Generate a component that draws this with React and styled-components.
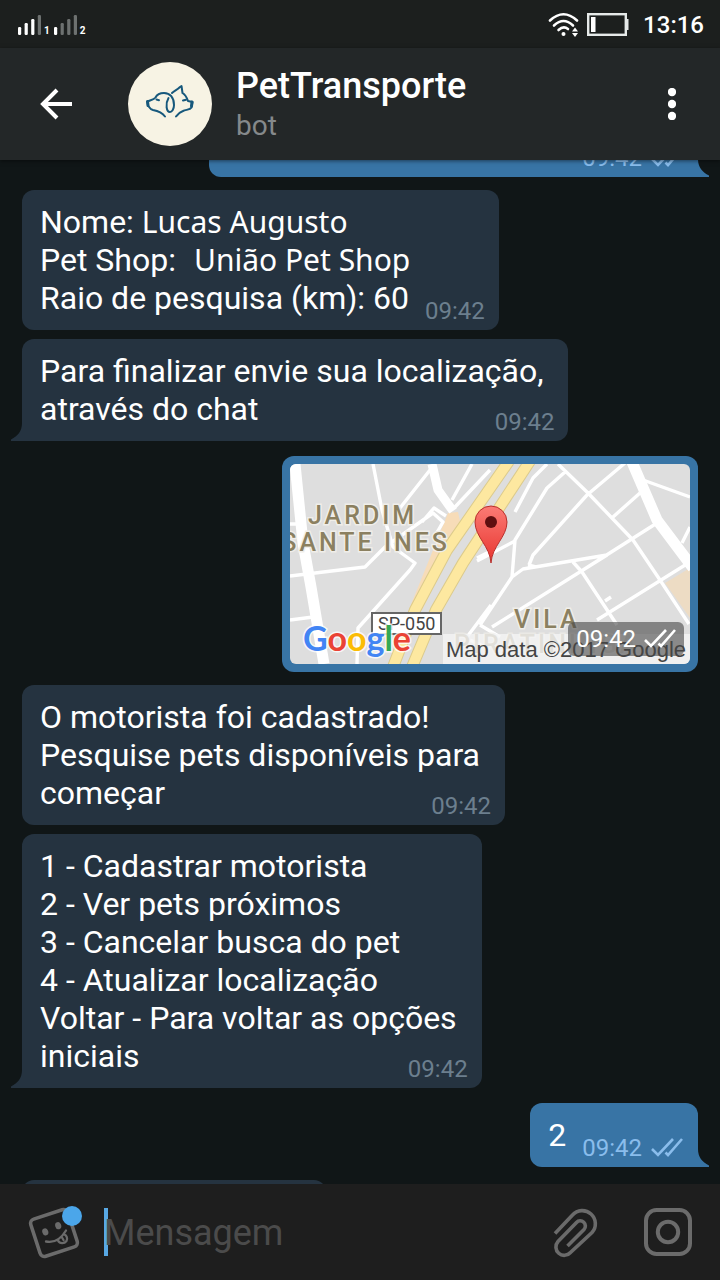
import React from "react";
import styled, { createGlobalStyle, css } from "styled-components";

const GlobalStyle = createGlobalStyle`
  *, *::before, *::after { box-sizing: border-box; }
  body { margin: 0; background: #101617; }
`;

const Screen = styled.div`
  display: flex;
  flex-direction: column;
  height: 100vh;
  overflow: hidden;
  background: #101617;
  color: #fff;
  font-family: Roboto, "Liberation Sans", sans-serif;
`;

/* ---------- status bar ---------- */

const StatusBar = styled.div`
  display: flex;
  flex: none;
  align-items: center;
  justify-content: space-between;
  height: 48px;
  padding: 2px 16px 0 18px;
  background: #1c1f1e;
`;

const StatusGroup = styled.div`
  display: flex;
  align-items: center;
  gap: ${(p) => p.$gap}px;
`;

const Signal = styled.span`
  display: flex;
  align-items: flex-end;
  gap: 3px;
  font-size: 10px;
  font-weight: 700;
  line-height: 9px;
`;

const Clock = styled.time`
  margin-left: 8px;
  font-size: 24px;
  font-weight: 500;
  line-height: 28px;
`;

/* ---------- header ---------- */

const Header = styled.header`
  position: relative;
  z-index: 1;
  display: flex;
  flex: none;
  align-items: center;
  height: 112px;
  padding: 0 24px 0 32px;
  background: #232728;
  box-shadow: 0 1px 4px rgba(0, 0, 0, 0.5);
`;

const IconButton = styled.button`
  display: flex;
  flex: none;
  align-items: center;
  justify-content: center;
  width: 48px;
  height: 56px;
  padding: 0;
  border: 0;
  background: none;
  color: ${(p) => p.$color || "#fff"};
  cursor: pointer;

  svg { flex: none; }
`;

const Avatar = styled.div`
  flex: none;
  width: 84px;
  height: 84px;
  margin: 0 24px 0 48px;
  border-radius: 50%;
  background: #f7f3e4;
`;

const Heading = styled.div`
  flex: 1;
  min-width: 0;
`;

const Title = styled.h1`
  margin: 0;
  font-size: 36px;
  font-weight: 500;
  line-height: 44px;
`;

const Subtitle = styled.p`
  margin: 0;
  color: #85898b;
  font-size: 28px;
  line-height: 36px;
`;

/* ---------- conversation ---------- */

const Conversation = styled.main`
  flex: 1;
  min-height: 0;
  overflow: hidden;
`;

const Messages = styled.ol`
  display: flex;
  flex-direction: column;
  align-items: flex-start;
  gap: 13px;
  margin: -49px 0 0;
  padding: 0 22px;
  list-style: none;
`;

const Group = styled.li`
  display: flex;
  flex-direction: column;
  align-self: ${(p) => (p.$out ? "flex-end" : "flex-start")};
  align-items: ${(p) => (p.$out ? "flex-end" : "flex-start")};
  gap: 9px;
  margin-top: ${(p) => (p.$out ? 2 : 0)}px;
`;

const bubbleFill = css`
  background: ${(p) => (p.$out ? "#3874a5" : "#253340")};
`;

const Bubble = styled.div`
  ${bubbleFill}
  position: relative;
  min-width: ${(p) => p.$minWidth || 0}px;
  min-height: 64px;
  padding: 13px 25px 13px 18px;
  border-radius: 12px;
  border-bottom-left-radius: ${(p) => (p.$tail && !p.$out ? 0 : 12)}px;
  border-bottom-right-radius: ${(p) => (p.$tail && p.$out ? 0 : 12)}px;
  font-size: 32px;
  line-height: 38px;
  white-space: pre-line;
`;

const TailShape = styled.svg`
  position: absolute;
  bottom: 0;
  ${(p) => (p.$out ? "left: 100%;" : "right: 100%;")}
`;

const Stamp = styled.span`
  display: flex;
  float: right;
  align-items: center;
  gap: 9px;
  margin: 18px ${(p) => (p.$out ? -10 : -11)}px -8px 16px;
  color: ${(p) => (p.$out ? "#8abdec" : "#6c7f8e")};
  font-size: 24px;
  line-height: 28px;
`;

const Answer = styled.span`
  margin-left: ${(p) => p.$gap}px;
  font-family: "Noto Sans", sans-serif;
  font-size: 30px;
  line-height: 32px;
`;

/* ---------- location message ---------- */

const LocationCard = styled.a`
  ${bubbleFill}
  position: relative;
  display: block;
  padding: 8px;
  border-radius: 12px;
  color: #fff;
  text-decoration: none;

  > svg { display: block; border-radius: 6px; }
`;

const MapStamp = styled.span`
  position: absolute;
  right: 14px;
  bottom: 16px;
  display: flex;
  align-items: center;
  gap: 8px;
  padding: 3px 8px;
  border-radius: 6px;
  background: rgba(70, 70, 70, 0.6);
  font-size: 24px;
  line-height: 28px;
`;

/* ---------- composer ---------- */

const Composer = styled.form`
  display: flex;
  flex: none;
  align-items: center;
  height: 96px;
  padding: 0 28px 0 32px;
  background: #1e1e1e;
`;

const Caret = styled.span`
  flex: none;
  width: 4px;
  height: 48px;
  margin: 0 -4px 0 24px;
  background: #58a8e4;
`;

const MessageInput = styled.input`
  flex: 1;
  min-width: 0;
  padding: 2px 0 0;
  border: 0;
  outline: 0;
  background: none;
  color: #fff;
  font: 36px/48px Roboto, "Liberation Sans", sans-serif;

  &::placeholder { color: #4b4b4b; opacity: 1; }
`;

const Actions = styled.div`
  display: flex;
  gap: 44px;
`;

/* ---------- drawings ---------- */

const SignalBars = ({ level }) => (
  <svg width="23" height="20" aria-hidden="true">
    {[8, 12, 16, 20].map((h, i) => (
      <rect key={h} x={i * 6.6} y={20 - h} width="3.2" height={h} rx="1.2" fill={i < level ? "#fff" : "#6d7170"} />
    ))}
  </svg>
);

const Wifi = () => (
  <svg width="32" height="26" viewBox="0 0 32 26" fill="none" stroke="#fff" strokeWidth="2.6" strokeLinecap="round" aria-hidden="true">
    <path d="M2 8.5Q15.500-4 29 8.500" />
    <path d="M6 13.500Q15.500 4.500 25 13.500" />
    <path d="M10.500 18Q15.500 13.500 20 17" />
    <circle cx="15.500" cy="22" r="2" fill="#fff" stroke="none" />
    <path d="M24 19.500l3-4 3 4zM24 21l3 4 3-4z" fill="#fff" stroke="none" />
  </svg>
);

const Battery = () => (
  <svg width="43" height="24" viewBox="0 0 43 24" aria-hidden="true">
    <rect x="2.200" y="1.200" width="37.600" height="20.600" fill="none" stroke="#e6eae9" strokeWidth="2.400" />
    <rect x="5" y="4" width="4.500" height="15" fill="#fff" />
    <rect x="39" y="6" width="3.500" height="11" fill="#e6eae9" />
  </svg>
);

const BackArrow = () => (
  <svg width="32" height="32" viewBox="0 0 32 32" fill="none" stroke="currentColor" strokeWidth="4" aria-hidden="true">
    <path d="M32 16H3M17 2L3 16l14 14" />
  </svg>
);

const Dots = () => (
  <svg width="8" height="32" viewBox="0 0 8 32" fill="currentColor" aria-hidden="true">
    <circle cx="4" cy="4" r="4.200" />
    <circle cx="4" cy="16" r="4.200" />
    <circle cx="4" cy="28" r="4.200" />
  </svg>
);

const PetLogo = () => (
  <svg width="84" height="84" viewBox="0 0 84 84" fill="none" stroke="#17587c" strokeWidth="2" strokeLinecap="round" strokeLinejoin="round" aria-hidden="true">
    <path d="M37 54.500C34 50.500 30 49 25 48C21.500 47 21.500 45 20 43.500L19.500 39.500C22 38 25.500 38 27.500 35.500C29.500 31.500 32 31 36 31C42 31 46 35.500 46 43C46 47 44 50 42 50C38.500 50 37 42 40.500 36" />
    <path d="M44 31C46 29 49 28 52 25L53.500 24L54.500 31C58 33 59 36 60 39L64.500 40L63.500 45.500C62 48 58 47.500 55 49C51 50.500 50 52 48 54.500" />
    <path d="M19.500 39.500L20 43.500M64 40L63.500 44" strokeWidth="3" />
    <path d="M28.500 37.500l2.500.8M55 38.500l3-.8" />
  </svg>
);

const Ticks = () => (
  <svg width="32" height="20" viewBox="0 0 32 20" fill="none" stroke="currentColor" strokeWidth="2.600" aria-hidden="true">
    <path d="M1 11l6 6L22 1M14.500 14.500l2.500 2.500L31 1" />
  </svg>
);

const Tail = ({ out }) => (
  <TailShape $out={out} width="12" height="18" viewBox="0 0 12 18" aria-hidden="true">
    {out ? (
      <path d="M0 0C0 8 4 13 11 16.500V18H0z" fill="#3874a5" />
    ) : (
      <path d="M12 0C12 8 8 13 1 16.500V18H12z" fill="#253340" />
    )}
  </TailShape>
);

const Sticker = () => (
  <svg width="56" height="56" viewBox="0 0 56 56" fill="none" stroke="currentColor" strokeWidth="3.600" strokeLinecap="round" aria-hidden="true">
    <rect x="6.500" y="9.500" width="39" height="39" rx="4.500" transform="rotate(-18 26 29)" />
    <g fill="currentColor" stroke="none">
      <ellipse cx="17.300" cy="28" rx="3" ry="3.600" transform="rotate(-18 17 28)" />
      <ellipse cx="30.300" cy="21.800" rx="3" ry="3.600" transform="rotate(-18 30 22)" />
    </g>
    <path d="M18 37.500Q30 40 38 26.500M30 36.500C32 40.500 36.500 39.500 38.500 37C40 34.500 38.500 31.500 36.500 30.500M34 33.500l1.500 2.500" strokeWidth="2.300" />
    <circle cx="44" cy="12" r="10" fill="#4ba6ea" stroke="none" />
  </svg>
);

const Paperclip = () => (
  <svg width="48" height="56" viewBox="1 0 48 56" fill="none" stroke="currentColor" strokeWidth="3.600" aria-hidden="true">
    <path d="M4 29.500L21.500 11A13 13 0 0 1 41 28.500L19.500 48.500A8 8 0 0 1 7 37.500L25.500 18.500A5 5 0 0 1 33 25.500L16.500 42" />
  </svg>
);

const CameraMark = () => (
  <svg width="48" height="48" viewBox="0 0 48 48" fill="none" stroke="currentColor" strokeWidth="4" aria-hidden="true">
    <rect x="2" y="2" width="44" height="44" rx="10.500" />
    <circle cx="24" cy="24" r="10.200" />
  </svg>
);

const HIGHWAYS = ["M219-3L157 86 125 146 103 203", "M240-3L173 99 146 146 122 203"];

const StreetMap = () => (
  <svg width="400" height="200" viewBox="0 0 400 200" role="img" aria-label="Mapa">
    <defs>
      <linearGradient id="pin" x1="0" y1="0" x2="0" y2="1">
        <stop offset="0" stopColor="#fb7b75" />
        <stop offset="1" stopColor="#e8352f" />
      </linearGradient>
    </defs>
    <rect width="400" height="200" fill="#dedede" />
    <path d="M158 49l10-1 4 18-40 80-14 2z" fill="#f7dcb8" />
    <path d="M375 119l25-15v50z" fill="#eddcc4" />
    <g fill="none" stroke="#fff" strokeWidth="3.400" strokeLinejoin="round">
      <path d="M83 0l9 46 11 37 22 16-5 7-52 58-1 36M0 112l75-9 20-20 48-34 10 9-8 14M132 58l12-14 12 8M140 6l-30 38M0 156l23-3M182 0l-20 36M165 43L200 6M187 94l14-7M177 173l24-32M180 176l20 9M0 60h8" />
      <path d="M268 0l30 29 45 47 27 40 29 44M335-1l-38 32-54 60-4 10M257 0l-14 14-18 34M275 8l-18 16-32 52-3 37M187 97l38-20M190 161l32-48 11-8 84-14-24 15M238 101l8 2M202 163l91-57 74-47M283 98l9 10 35 53M315 137l6-4M307 156l93-58M323 53l27-24M353 16l47 17M392 79l8-16M190 161l20 12" />
      <path d="M5 0l8 79 8 44 13 77" strokeWidth="11" />
      <path d="M142 0l6 26 15 21" strokeWidth="9" />
      <path d="M342-2l25 58 36 48" strokeWidth="11" />
    </g>
    {HIGHWAYS.map((d) => (
      <g key={d} fill="none">
        <path d={d} stroke="#dccb8c" strokeWidth="12" />
        <path d={d} stroke="#fde8a0" strokeWidth="10" />
      </g>
    ))}
    <g fill="#8b8060" stroke="#f0eee9" strokeWidth="3" paintOrder="stroke" fontFamily="Roboto, sans-serif" fontSize="25" fontWeight="500" letterSpacing="3">
      <text x="18" y="60">JARDIM</text>
      <text x="160" y="87" textAnchor="end">SANTE INES</text>
      <text x="224" y="164">VILA</text>
      <text x="164" y="189" opacity="0.700">PIRATININGA</text>
    </g>
    <rect x="82" y="149" width="69" height="21" fill="#fff" stroke="#666" strokeWidth="2" />
    <text x="88" y="166" fill="#444" fontFamily="Roboto, sans-serif" fontSize="18">SP-050</text>
    <rect x="153" y="170" width="247" height="30" fill="#f5f5f5" fillOpacity="0.750" />
    <text x="396" y="193" textAnchor="end" fill="#444" fontFamily="Liberation Sans, sans-serif" fontSize="22">Map data ©2017 Google</text>
    <text x="13" y="187" fontFamily="Lato, sans-serif" fontSize="34" fontWeight="700" stroke="#fff" strokeWidth="3" strokeOpacity="0.800" paintOrder="stroke">
      <tspan fill="#4285f4">G</tspan>
      <tspan fill="#ea4335">o</tspan>
      <tspan fill="#fbbc05">o</tspan>
      <tspan fill="#4285f4">g</tspan>
      <tspan fill="#34a853">l</tspan>
      <tspan fill="#ea4335">e</tspan>
    </text>
    <path d="M201 99C200 82 185 73 185 58A16 16 0 0 1 217 58C217 73 202 82 201 99z" fill="url(#pin)" stroke="#b8302c" strokeWidth="1" />
    <circle cx="201" cy="58" r="6" fill="#5f0f10" />
  </svg>
);

/* ---------- messages ---------- */

const Message = ({ out, tail, time = "09:42", minWidth, children }) => (
  <Bubble $out={out} $tail={tail} $minWidth={minWidth}>
    {children}
    {time && (
      <Stamp $out={out}>
        <time>{time}</time>
        {out && <Ticks />}
      </Stamp>
    )}
    {tail && <Tail out={out} />}
  </Bubble>
);

const MENU = [
  "1 - Cadastrar motorista",
  "2 - Ver pets próximos",
  "3 - Cancelar busca do pet",
  "4 - Atualizar localização",
  "Voltar - Para voltar as opções",
  "iniciais",
].join("\n");

export default function App() {
  return (
    <Screen>
      <GlobalStyle />
      <StatusBar>
        <StatusGroup $gap={4}>
          <Signal><SignalBars level={3} />1</Signal>
          <Signal><SignalBars level={1} />2</Signal>
        </StatusGroup>
        <StatusGroup $gap={6}>
          <Wifi />
          <Battery />
          <Clock>13:16</Clock>
        </StatusGroup>
      </StatusBar>

      <Header>
        <IconButton type="button" aria-label="Voltar"><BackArrow /></IconButton>
        <Avatar><PetLogo /></Avatar>
        <Heading>
          <Title>PetTransporte</Title>
          <Subtitle>bot</Subtitle>
        </Heading>
        <IconButton type="button" aria-label="Mais opções"><Dots /></IconButton>
      </Header>

      <Conversation>
        <Messages>
          <Group $out>
            <Message out tail minWidth={489} />
          </Group>
          <Group>
            <Message>
              Nome:<Answer $gap={8}>Lucas Augusto</Answer>{"\n"}
              Pet Shop:<Answer $gap={18}>União Pet Shop</Answer>{"\n"}
              Raio de pesquisa (km): 60
            </Message>
            <Message tail>{"Para finalizar envie sua localização,\natravés do chat"}</Message>
          </Group>
          <Group $out>
            <LocationCard $out href="#mapa">
              <StreetMap />
              <MapStamp>
                <time>09:42</time>
                <Ticks />
              </MapStamp>
            </LocationCard>
          </Group>
          <Group>
            <Message>{"O motorista foi cadastrado!\nPesquise pets disponíveis para\ncomeçar"}</Message>
            <Message tail>{MENU}</Message>
          </Group>
          <Group $out>
            <Message out tail>2</Message>
          </Group>
          <Group>
            <Message time={null} minWidth={304} />
          </Group>
        </Messages>
      </Conversation>

      <Composer onSubmit={(e) => e.preventDefault()}>
        <IconButton type="button" $color="#6b6b6b" aria-label="Figurinhas"><Sticker /></IconButton>
        <Caret />
        <MessageInput type="text" placeholder="Mensagem" aria-label="Mensagem" />
        <Actions>
          <IconButton type="button" $color="#6b6b6b" aria-label="Anexar"><Paperclip /></IconButton>
          <IconButton type="button" $color="#6b6b6b" aria-label="Câmera"><CameraMark /></IconButton>
        </Actions>
      </Composer>
    </Screen>
  );
}
